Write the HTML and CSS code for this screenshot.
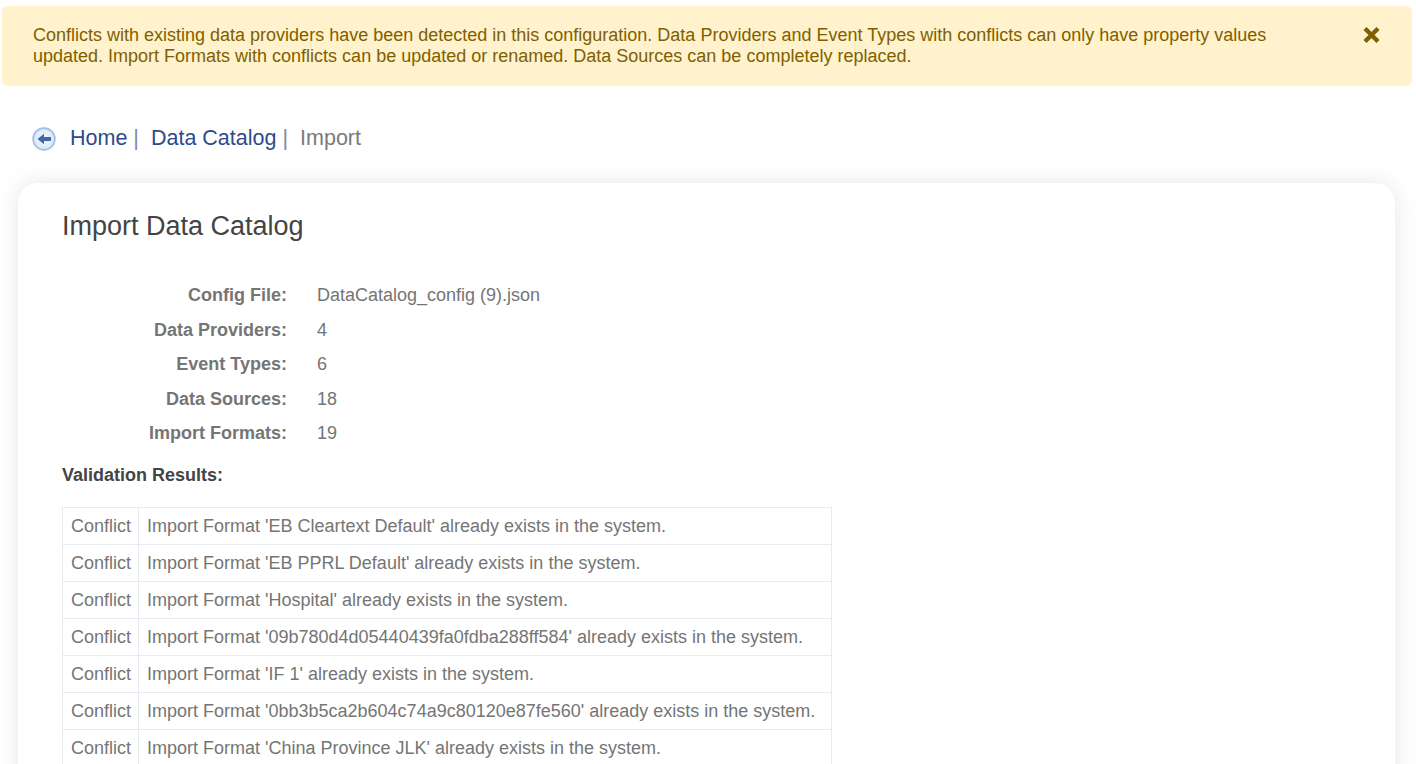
FILE: index.html
```html
<!DOCTYPE html>
<html lang="en">
<head>
<meta charset="utf-8">
<title>Import Data Catalog</title>
<link rel="stylesheet" href="styles.css">
</head>
<body>
<div class="alert">
  <p class="alert-text">Conflicts with existing data providers have been detected in this configuration. Data Providers and Event Types with conflicts can only have property values updated. Import Formats with conflicts can be updated or renamed. Data Sources can be completely replaced.</p>
  <svg class="alert-close" viewBox="0 0 18 18" width="18" height="18" aria-hidden="true"><path d="M2 2.5 15 15.5M15 2.5 2 15.5" stroke="#7f6000" stroke-width="4.4" fill="none"/></svg>
</div>
<nav class="crumbs">
  <svg class="back" viewBox="0 0 24 24" width="24" height="24" aria-hidden="true">
    <defs><radialGradient id="g" cx="50%" cy="50%" r="50%"><stop offset="0" stop-color="#f4f8fd"/><stop offset="0.75" stop-color="#e2ecf9"/><stop offset="1" stop-color="#c3d6f0"/></radialGradient></defs>
    <circle cx="12" cy="12" r="11" fill="url(#g)" stroke="#9dbce6" stroke-width="1.4"/>
    <path d="M5.5 12 12 6.8V10H19V14H12V17.2Z" fill="#3e68a8"/>
  </svg>
  <a class="crumb" href="#">Home</a><span class="sep">|</span>
  <a class="crumb" href="#">Data Catalog</a><span class="sep">|</span>
  <span class="current">Import</span>
</nav>
<main class="card">
  <h1 class="title">Import Data Catalog</h1>
  <dl class="facts">
    <div class="fact"><dt>Config File:</dt><dd>DataCatalog_config (9).json</dd></div>
    <div class="fact"><dt>Data Providers:</dt><dd>4</dd></div>
    <div class="fact"><dt>Event Types:</dt><dd>6</dd></div>
    <div class="fact"><dt>Data Sources:</dt><dd>18</dd></div>
    <div class="fact"><dt>Import Formats:</dt><dd>19</dd></div>
  </dl>
  <h2 class="results">Validation Results:</h2>
  <table class="grid">
    <tr><td>Conflict</td><td>Import Format 'EB Cleartext Default' already exists in the system.</td></tr>
    <tr><td>Conflict</td><td>Import Format 'EB PPRL Default' already exists in the system.</td></tr>
    <tr><td>Conflict</td><td>Import Format 'Hospital' already exists in the system.</td></tr>
    <tr><td>Conflict</td><td>Import Format '09b780d4d05440439fa0fdba288ff584' already exists in the system.</td></tr>
    <tr><td>Conflict</td><td>Import Format 'IF 1' already exists in the system.</td></tr>
    <tr><td>Conflict</td><td>Import Format '0bb3b5ca2b604c74a9c80120e87fe560' already exists in the system.</td></tr>
    <tr><td>Conflict</td><td>Import Format 'China Province JLK' already exists in the system.</td></tr>
  </table>
</main>
</body>
</html>
```
FILE: styles.css
```css
html, body { margin: 0; padding: 0; height: 764px; overflow: hidden; background: #fff; }
body { font-family: "Liberation Sans", Arial, sans-serif; font-size: 18px; color: #757575; }

.alert {
  display: flex;
  justify-content: space-between;
  margin: 6px 4px 0 2px;
  height: 80px;
  box-sizing: border-box;
  padding: 19px 31px 0 31px;
  background: #fff2cc;
  border-radius: 6px;
  color: #7f6000;
}
.alert-text { margin: 0; width: 1260px; line-height: 21px; }
.alert-close { flex: none; margin-top: 1px; }

.crumbs {
  display: flex;
  align-items: center;
  margin: 37px 0 0 32px;
  height: 30px;
  font-size: 21.5px;
}
.back { flex: none; margin-right: 14px; margin-top: 2px; }
.crumb { color: #2f4a8c; text-decoration: none; }
.sep { color: #7a8aa8; margin: 0 12px 0 6px; }
.current { color: #7a7a7a; }

.card {
  margin: 30px 21px 0 18px;
  padding: 27px 44px 0;
  height: 640px;
  background: #fff;
  border-radius: 20px;
  box-shadow: 0 0 22px rgba(120, 130, 160, 0.2);
}
.title { margin: 0; font-size: 27px; font-weight: 400; line-height: 32px; color: #444; }

.facts { margin: 42px 0 0; }
.fact { display: flex; height: 34.5px; line-height: 22px; }
.fact dt { width: 225px; text-align: right; font-weight: 700; color: #757575; }
.fact dd { margin: 0 0 0 30px; }

.results { margin: 7px 0 0; font-size: 18px; line-height: 22px; font-weight: 700; color: #444; }

.grid { margin-top: 21px; border-collapse: collapse; width: 770px; }
.grid td {
  height: 36px;
  padding: 0 8px;
  border: 1px solid #e6ebf2;
  line-height: 20px;
  white-space: nowrap;
}
.grid td:first-child { width: 58px; padding-right: 7px; }
```
